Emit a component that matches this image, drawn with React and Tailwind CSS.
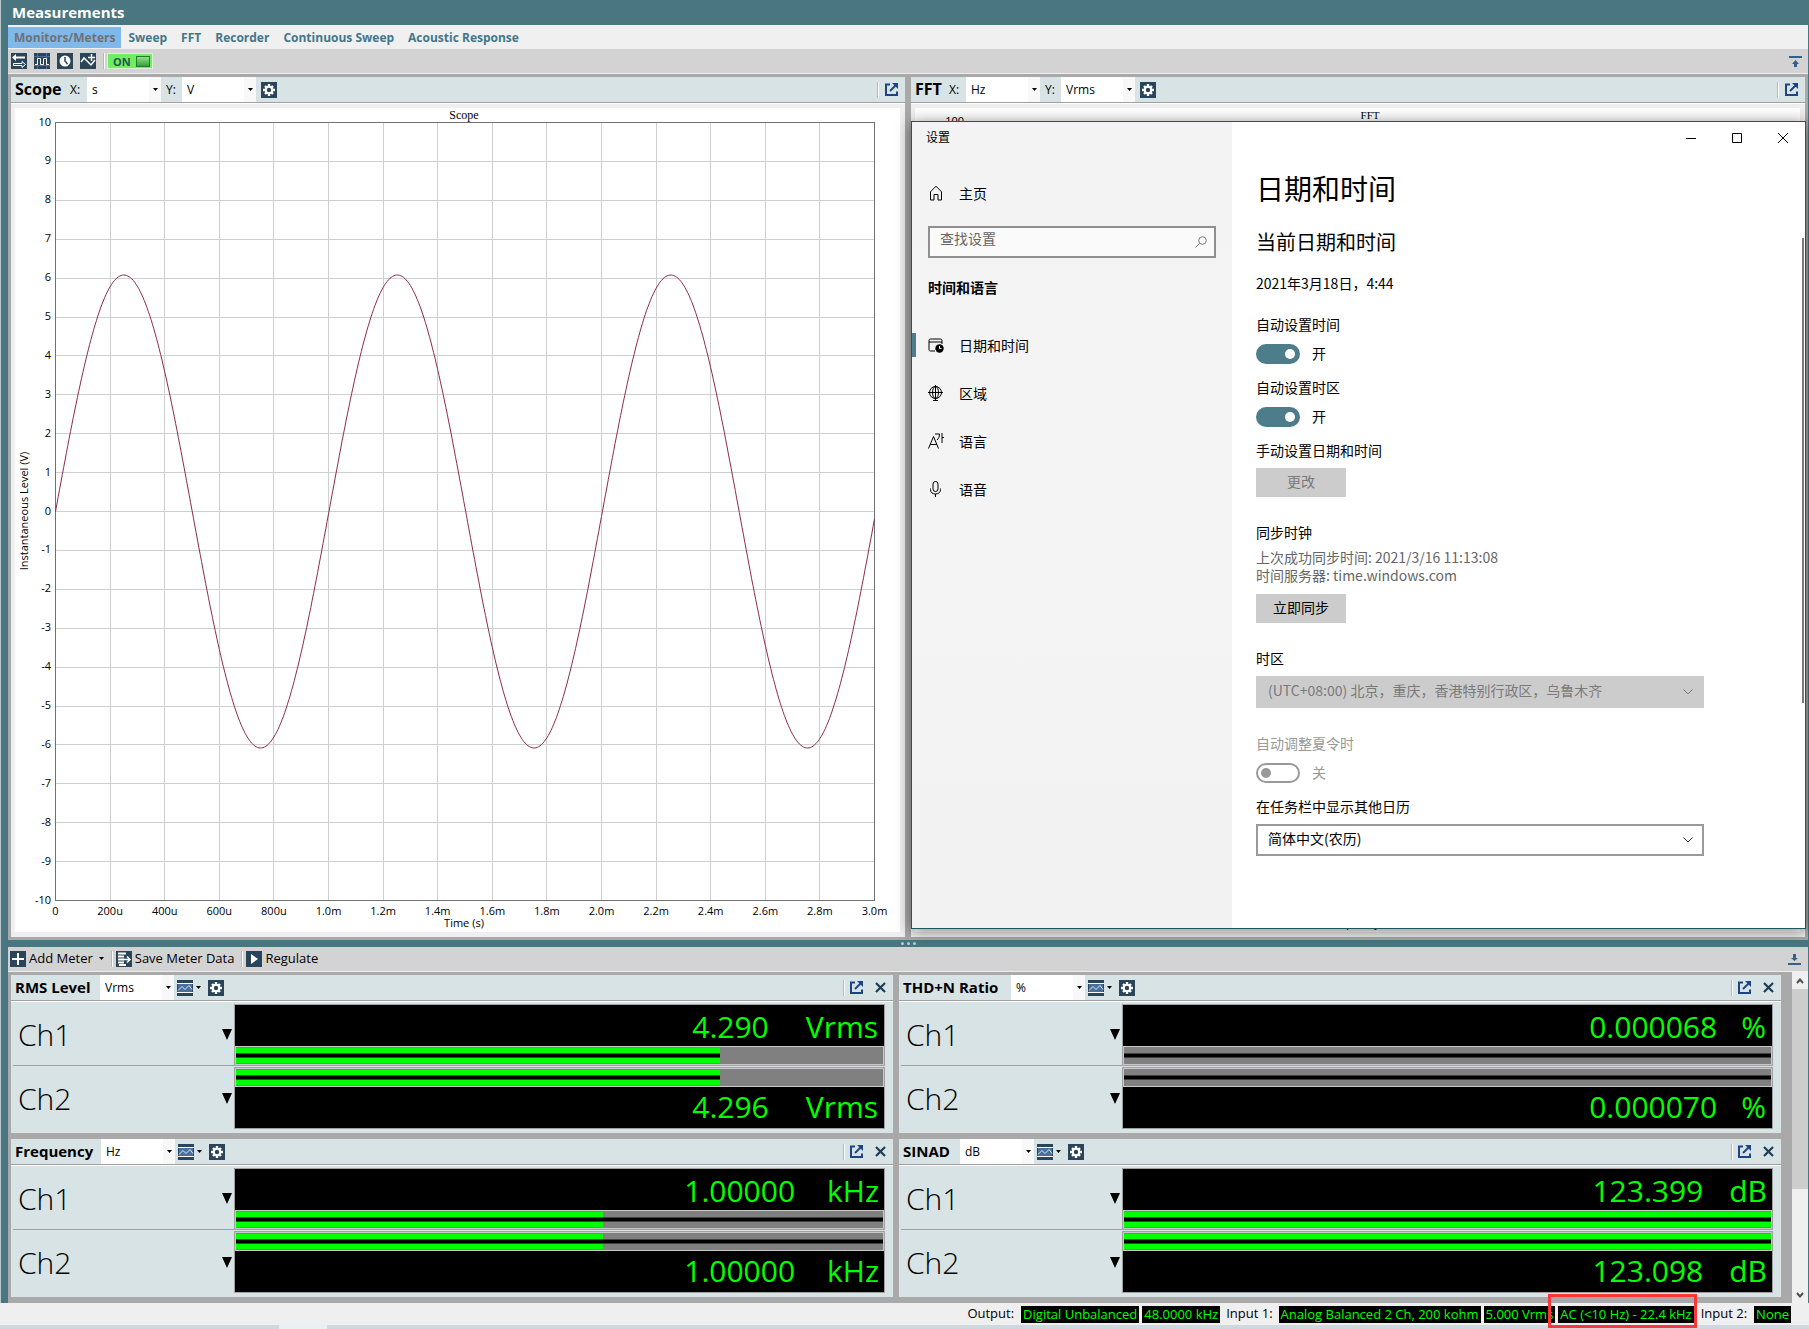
import React from 'react';

const TABS = ['Monitors/Meters', 'Sweep', 'FFT', 'Recorder', 'Continuous Sweep', 'Acoustic Response'];

const METERS = [
  {
    title: 'RMS Level',
    titleWidth: 'w-[89px]',
    unit: 'Vrms',
    gap: 'gap-[37px] pr-[6px]',
    fill: 74.8,
    lineFull: false,
    rows: [['4.290', 'Vrms'], ['4.296', 'Vrms']],
  },
  {
    title: 'THD+N Ratio',
    titleWidth: 'w-[112px]',
    unit: '%',
    gap: 'gap-6 pr-[6px]',
    fill: 0,
    lineFull: true,
    rows: [['0.000068', '%'], ['0.000070', '%']],
  },
  {
    title: 'Frequency',
    titleWidth: 'w-[90px]',
    unit: 'Hz',
    gap: 'gap-8 pr-[5px]',
    fill: 56.7,
    lineFull: true,
    rows: [['1.00000', 'kHz'], ['1.00000', 'kHz']],
  },
  {
    title: 'SINAD',
    titleWidth: 'w-[61px]',
    unit: 'dB',
    gap: 'gap-[26px] pr-[5px]',
    fill: 100,
    lineFull: true,
    rows: [['123.399', 'dB'], ['123.098', 'dB']],
  },
];

const IconBox = ({ label, children }) => (
  <button type="button" aria-label={label} className="block w-4 h-4 shrink-0 bg-[#2a4559]">
    <svg width="16" height="16" viewBox="0 0 16 16" fill="none" className="block">
      {children}
    </svg>
  </button>
);

const GearIcon = () => (
  <IconBox label="Settings">
    <path d="M8 2v12M2 8h12M4 4l8 8M12 4l-8 8" stroke="#fff" strokeWidth="2.4" />
    <circle cx="8" cy="8" r="3.200" fill="#2a4559" stroke="#fff" strokeWidth="2" />
  </IconBox>
);

const PopOutIcon = () => (
  <button type="button" aria-label="Open in window" className="block shrink-0">
    <svg width="13" height="13" viewBox="0 0 13 13" fill="none" stroke="#1f4486" className="block">
      <path d="M5 1.500H1V12h11V8.500" strokeWidth="2" />
      <path d="M7 0h6v6z" fill="#1f4486" stroke="none" />
      <path d="M10.500 2.500L5 8" strokeWidth="2" />
    </svg>
  </button>
);

const CloseIcon = () => (
  <button type="button" aria-label="Close meter" className="block shrink-0">
    <svg width="11" height="11" viewBox="0 0 11 11" stroke="#1d3d55" strokeWidth="2.2" className="block">
      <path d="M1 1l9 9M10 1L1 10" />
    </svg>
  </button>
);

const Caret = () => (
  <svg width="5" height="3" viewBox="0 0 5 3" className="block shrink-0">
    <path d="M0 0h5L2.500 3z" fill="#000" />
  </svg>
);

const Divider = () => <span className="block w-[2px] h-4 shrink-0 bg-[#b8b8b8] border-r border-white" />;

const UnitSelect = ({ label, value }) => (
  <div className="relative w-[74px] h-[25px] shrink-0">
    <select
      aria-label={label}
      defaultValue={value}
      className="block w-full h-full appearance-none bg-white pl-[5px] pr-3 text-xs text-black outline-none"
    >
      <option>{value}</option>
    </select>
    <span className="absolute right-0 top-0 w-3 h-full flex items-center justify-center bg-[#f8f8f8] pointer-events-none">
      <Caret />
    </span>
  </div>
);

const ToolStrip = ({ children }) => (
  <div className="h-[25px] flex items-center bg-[#d3d3d3] border-b border-[#eeeeee]">{children}</div>
);

const PanelHeader = ({ title, titleClass, children, actions }) => (
  <div className="h-[27px] flex flex-col">
    <div className="h-[25px] flex items-center bg-[#d8e3e5]">
      <h2 className={`${titleClass} shrink-0 pl-1 pb-px leading-none font-bold text-black whitespace-nowrap`}>{title}</h2>
      {children}
      <div className="ml-auto flex items-center">{actions}</div>
    </div>
    <div className="h-[2px] bg-[#9f9f9f] border-b border-white" />
  </div>
);

const GraphPanel = ({ title, titleClass, x, y, plot, children }) => (
  <section className="relative flex-1 min-w-0 bg-[#efefef]">
    <PanelHeader
      title={title}
      titleClass={titleClass}
      actions={
        <div className="flex items-center gap-[6px] pr-[7px]">
          <Divider />
          <PopOutIcon />
        </div>
      }
    >
      <span className="w-[17px] text-xs">X:</span>
      <UnitSelect label={`${title} X unit`} value={x} />
      <span className="w-[21px] pl-[5px] text-xs">Y:</span>
      <UnitSelect label={`${title} Y unit`} value={y} />
      <span className="pl-[5px]">
        <GearIcon />
      </span>
    </PanelHeader>
    <div className="pt-1 pb-[5px] pl-1 pr-[5px]">{plot}</div>
    {children}
  </section>
);

const LEFT = 40.5;
const TOP = 14.5;
const WIDTH = 819;
const HEIGHT = 778;

const ScopePlot = () => {
  const xLabels = ['0', '200u', '400u', '600u', '800u', '1.0m', '1.2m', '1.4m', '1.6m', '1.8m', '2.0m', '2.2m', '2.4m', '2.6m', '2.8m', '3.0m'];
  const points = [];
  for (let i = 0; i <= 600; i++) {
    const t = (i / 600) * 2.995;
    const v = 6.08 * Math.sin(2 * Math.PI * t);
    points.push(`${(LEFT + (i / 600) * WIDTH).toFixed(1)},${(TOP + HEIGHT / 2 - (v * HEIGHT) / 20).toFixed(1)}`);
  }
  return (
    <svg viewBox="0 0 885 824" className="block w-full h-auto bg-white" fontSize="11">
      <text x="449" y="11" textAnchor="middle" fontSize="12" className="font-['Liberation_Serif',serif]">
        Scope
      </text>
      <g stroke="#cfcfcf" shapeRendering="crispEdges">
        {xLabels.slice(1, 15).map((l, i) => (
          <line key={l} x1={LEFT + ((i + 1) * WIDTH) / 15} x2={LEFT + ((i + 1) * WIDTH) / 15} y1={TOP} y2={TOP + HEIGHT} />
        ))}
        {Array.from({ length: 19 }, (_, i) => (
          <line key={i} x1={LEFT} x2={LEFT + WIDTH} y1={TOP + ((i + 1) * HEIGHT) / 20} y2={TOP + ((i + 1) * HEIGHT) / 20} />
        ))}
      </g>
      <rect x={LEFT} y={TOP} width={WIDTH} height={HEIGHT} fill="none" stroke="#707070" />
      {xLabels.map((l, i) => (
        <text key={l} x={LEFT + (i * WIDTH) / 15} y="807" textAnchor="middle">
          {l}
        </text>
      ))}
      {Array.from({ length: 21 }, (_, i) => (
        <text key={i} x="36" y={TOP + (i * HEIGHT) / 20 + 3} textAnchor="end">
          {10 - i}
        </text>
      ))}
      <text x="449" y="819" textAnchor="middle">
        Time (s)
      </text>
      <text transform="translate(13 403) rotate(-90)" textAnchor="middle">
        Instantaneous Level (V)
      </text>
      <polyline points={points.join(' ')} fill="none" stroke="#8a2c48" />
    </svg>
  );
};

const FftPlot = () => (
  <svg viewBox="0 0 885 824" className="block w-full h-auto bg-white" fontSize="11">
    <text x="455" y="11" textAnchor="middle" fontSize="11" className="font-['Liberation_Serif',serif]">
      FFT
    </text>
    <text x="49" y="17" textAnchor="end">
      100
    </text>
    <text x="449" y="819" textAnchor="middle">
      Frequency (Hz)
    </text>
  </svg>
);

const LevelBar = ({ fill, lineFull }) => (
  <div className="h-[19px] border border-[#c8c8c8] bg-[#808080] flex flex-col justify-center relative">
    <div className="absolute inset-y-px left-0 bg-[#00ff00]" style={{ width: `${fill}%` }} />
    <div
      className="relative h-[5px] bg-black border-y border-[#404040]"
      style={{ width: lineFull ? '100%' : `${fill}%` }}
    />
  </div>
);

const Readout = ({ value, unit, gap, pad }) => (
  <div className={`h-[41px] flex items-center justify-end ${gap} ${pad} text-[30px] leading-[39px] text-[#00ff00]`}>
    <span>{value}</span>
    <span>{unit}</span>
  </div>
);

const ChannelLabel = ({ name }) => (
  <div className="w-[221px] shrink-0 flex items-center justify-between pl-[5px] pr-[2px]">
    <span className="pt-px text-[30px] leading-[40px] font-light text-black">{name}</span>
    <button type="button" aria-label={`${name} options`}>
      <svg width="10" height="11" viewBox="0 0 10 11" className="block">
        <path d="M0 0h10L5 11z" fill="#000" />
      </svg>
    </button>
  </div>
);

const Meter = ({ meter }) => {
  const { title, titleWidth, unit, gap, fill, lineFull, rows } = meter;
  return (
    <section className="min-w-0 bg-[#d8e3e5]">
      <PanelHeader
        title={title}
        titleClass={`${titleWidth} text-[15px]`}
        actions={
          <div className="flex items-center pr-[7px]">
            <Divider />
            <span className="pl-[5px] pr-3">
              <PopOutIcon />
            </span>
            <CloseIcon />
          </div>
        }
      >
        <UnitSelect label={`${title} unit`} value={unit} />
        <span className="flex items-center gap-[3px] pl-[3px] pr-[7px]">
          <IconBox label="Graph style">
            <path d="M1 4h14v8H1z" fill="#4a6f9c" />
            <path d="M0 3.500h16M0 12.500h16" stroke="#fff" />
            <path d="M1 10.500l4-4 3 3 4-4 3 4" stroke="#d5ecf5" />
          </IconBox>
          <Caret />
        </span>
        <GearIcon />
      </PanelHeader>
      <div className="pt-[2px] pb-1 pr-2 pl-[2px]">
        <div className="flex">
          <div className="flex border-b border-[#a0a0a0]">
            <ChannelLabel name="Ch1" />
          </div>
          <div className="flex-1 bg-black border border-[#a0a0a0]">
            <Readout value={rows[0][0]} unit={rows[0][1]} gap={gap} pad="pt-[2px]" />
            <LevelBar fill={fill} lineFull={lineFull} />
          </div>
        </div>
        <div className="flex pt-px">
          <ChannelLabel name="Ch2" />
          <div className="flex-1 bg-black border border-[#a0a0a0]">
            <LevelBar fill={fill} lineFull={lineFull} />
            <Readout value={rows[1][0]} unit={rows[1][1]} gap={gap} pad="pb-[2px]" />
          </div>
        </div>
      </div>
    </section>
  );
};

const NavItem = ({ label, active, children }) => (
  <a href="#" className="h-12 flex items-center text-[14px] text-black">
    <span className={`w-1 h-6 mr-3 ${active ? 'bg-[#4d7d8b]' : ''}`} />
    <svg width="16" height="16" viewBox="0 0 16 16" fill="none" stroke="#000" className="block mr-[15px]">
      {children}
    </svg>
    {label}
  </a>
);

const Toggle = ({ id, label, checked, disabled }) => (
  <div className={`h-[63px] ${disabled ? 'text-[#999999]' : 'text-black'}`}>
    <label htmlFor={id} className="block leading-5">
      {label}
    </label>
    <div className="flex items-center gap-3 pt-[10px]">
      <input
        id={id}
        type="checkbox"
        role="switch"
        defaultChecked={checked}
        disabled={disabled}
        className="appearance-none w-11 h-5 rounded-full border-2 border-[#999999] flex items-center px-[3px] checked:border-[#4d7d8b] checked:bg-[#4d7d8b] checked:justify-end before:block before:w-[10px] before:h-[10px] before:rounded-full before:bg-[#999999] checked:before:bg-white"
      />
      <span className="pb-[2px] leading-[18px]">{checked ? '开' : '关'}</span>
    </div>
  </div>
);

const SettingsSelect = ({ id, value, disabled }) => (
  <div className="relative w-[448px] max-w-full h-8">
    <select
      id={id}
      defaultValue={value}
      disabled={disabled}
      className="block w-full h-full appearance-none border-2 border-[#999999] bg-white pl-[10px] pb-[3px] text-[14px] text-black opacity-100 disabled:border-[#cccccc] disabled:bg-[#cccccc] disabled:text-[#7a7a7a]"
    >
      <option>{value}</option>
    </select>
    <svg width="10" height="6" viewBox="0 0 10 6" fill="none" stroke={disabled ? '#7a7a7a' : '#333'} className="absolute right-[11px] top-[13px] pointer-events-none">
      <path d="M.5 .5L5 5 9.500 .5" />
    </svg>
  </div>
);

const SettingsWindow = () => (
  <div
    role="dialog"
    aria-label="设置"
    className="absolute z-10 left-0 -right-px top-[44px] bottom-2 flex border border-[#1e5661] bg-white text-[14px] text-black font-['Noto_Sans_CJK_SC',sans-serif] shadow-[0_2px_14px_rgba(0,0,0,0.5)]"
  >
    <aside className="w-[320px] shrink-0 bg-linear-to-b from-[#f3f3f3] via-[#f4f4f4] to-[#f3f2f2]">
      <div className="h-[29px] flex items-center pl-[14px] text-xs">设置</div>
      <div className="pt-[18px]">
        <NavItem label="主页">
          <path d="M2.500 6.800L8 1.200l5.500 5.600V15h-3.500V9.500H6V15H2.500z" strokeLinejoin="round" />
        </NavItem>
      </div>
      <div className="ml-4 mr-4 mt-[9px] relative">
        <input
          type="text"
          aria-label="查找设置"
          placeholder="查找设置"
          className="block w-full h-8 border-2 border-[#8f8f8f] bg-[#fafafa] pl-[10px] pb-2 text-[14px] leading-5 placeholder:text-[#666666]"
        />
        <svg width="12" height="12" viewBox="0 0 12 12" fill="none" stroke="#777" className="absolute right-[9px] top-[10px]">
          <circle cx="7.500" cy="4.500" r="3.800" />
          <path d="M4.700 7.300L.5 11.500" />
        </svg>
      </div>
      <h3 className="pl-4 mt-[19px] leading-5 font-bold">时间和语言</h3>
      <nav className="mt-6">
        <NavItem label="日期和时间" active>
          <path d="M7 14H2.500C1.500 14 1 13.500 1 12.500v-9C1 2.500 1.500 2 2.500 2h10c1 0 1.500.5 1.500 1.500V7M1 5h13" />
          <circle cx="11.500" cy="11.500" r="4.200" fill="#000" stroke="none" />
          <path d="M11.500 9v2.500h2" stroke="#fff" />
        </NavItem>
        <NavItem label="区域">
          <circle cx="7.500" cy="7.500" r="6" />
          <ellipse cx="7.500" cy="7.500" rx="3" ry="6" />
          <path d="M0 7.500h15M7.500 0v15.500M5 15.500h5" />
        </NavItem>
        <NavItem label="语言">
          <path d="M.5 15.500L5.500 3.500l5 12M2.300 11.500h6.400M7 1h4.500c0 3-1 4.500-2.500 6M14 0v10M14 4.500h2" />
        </NavItem>
        <NavItem label="语音">
          <rect x="5" y=".5" width="5" height="10" rx="2.500" />
          <path d="M2.500 7.500v1c0 3 2 4.500 5 4.500s5-1.500 5-4.500v-1M7.500 13v3" />
        </NavItem>
      </nav>
    </aside>
    <div className="relative flex-1 min-w-0 pl-6">
      <div className="h-8 flex justify-end items-center gap-9 pr-[17px]">
        <button type="button" aria-label="最小化">
          <svg width="10" height="10" viewBox="0 0 10 10" stroke="#000" className="block">
            <path d="M0 5.500h10" />
          </svg>
        </button>
        <button type="button" aria-label="最大化">
          <svg width="10" height="10" viewBox="0 0 10 10" fill="none" stroke="#000" className="block">
            <path d="M.5 .5h9v9h-9z" />
          </svg>
        </button>
        <button type="button" aria-label="关闭">
          <svg width="10" height="10" viewBox="0 0 10 10" stroke="#000" className="block">
            <path d="M0 0l10 10M10 0L0 10" />
          </svg>
        </button>
      </div>
      <h1 className="mt-[15px] text-[28px] leading-[38px]">日期和时间</h1>
      <h2 className="mt-[21px] text-[20px] leading-7">当前日期和时间</h2>
      <p className="mt-[17px] mb-[21px] leading-5">2021年3月18日，4:44</p>
      <Toggle id="auto-time" label="自动设置时间" checked />
      <Toggle id="auto-zone" label="自动设置时区" checked />
      <p className="leading-5">手动设置日期和时间</p>
      <button type="button" disabled className="block mt-2 w-[90px] h-[29px] pb-[2px] bg-[#cccccc] text-[#7a7a7a]">
        更改
      </button>
      <p className="mt-[25px] leading-5">同步时钟</p>
      <p className="mt-[6px] leading-[18px] text-[#666666]">
        上次成功同步时间: 2021/3/16 11:13:08
        <br />
        时间服务器: time.windows.com
      </p>
      <button type="button" className="block mt-[10px] w-[90px] h-[29px] pb-[2px] bg-[#cccccc]">
        立即同步
      </button>
      <label htmlFor="zone" className="block mt-[25px] mb-2 leading-5">
        时区
      </label>
      <SettingsSelect id="zone" value="(UTC+08:00) 北京，重庆，香港特别行政区，乌鲁木齐" disabled />
      <div className="mt-[25px]">
        <Toggle id="dst" label="自动调整夏令时" disabled />
      </div>
      <label htmlFor="calendar" className="block mb-2 leading-5">
        在任务栏中显示其他日历
      </label>
      <SettingsSelect id="calendar" value="简体中文(农历)" />
      <span className="absolute right-px top-[116px] w-[2px] h-[465px] bg-[#7a7a7a]" />
    </div>
  </div>
);

const StatusValue = ({ children }) => (
  <span className="block h-[17px] px-[2px] bg-black text-[#00ff00] leading-[17px]">{children}</span>
);

const App = () => (
  <div className="min-h-screen flex flex-col bg-[#4a7682] text-xs text-black font-['Open_Sans','Noto_Sans',sans-serif]">
    <div className="flex-1 flex flex-col border-l border-[#b9c9ce]">
      <header className="h-[25px] pl-[11px] pb-px flex items-center">
        <h1 className="text-[15px] leading-5 font-bold text-white">Measurements</h1>
      </header>

      <div className="pl-[7px] pr-px">
        <nav className="h-6 flex items-center bg-[#f0f0f0]">
          {TABS.map((tab, i) => (
            <a
              key={tab}
              href="#"
              className={`h-[21px] leading-[21px] font-bold whitespace-nowrap ${
                i === 0 ? 'px-[6px] bg-[#7fb8ea] text-[#6f7275]' : 'px-[7px] text-[#44768a]'
              }`}
            >
              {tab}
            </a>
          ))}
        </nav>
        <ToolStrip>
          <div className="flex items-center gap-[7px] pl-[3px]">
            <IconBox label="Switch inputs">
              <path d="M1 4.500L5 1v2.500h9v2H5V8z" fill="#fff" />
              <path d="M14.500 11.500L11 8.500v2H2.500v2H11v2z" stroke="#fff" />
            </IconBox>
            <IconBox label="Digital wave">
              <path d="M0 3.500h16M0 12.500h16M3.500 0v16M12.500 0v16" stroke="#4c6ea0" />
              <path d="M1 11.500h2.500v-6h3v6h3v-6h3v6H15" stroke="#fff" />
            </IconBox>
            <IconBox label="Clock">
              <circle cx="8" cy="8" r="5.500" fill="#fff" />
              <path d="M8 4v4l2.500 3" stroke="#2a4559" strokeWidth="1.500" />
            </IconBox>
            <IconBox label="Add wave">
              <path d="M1 9l3-4 7 7 4-5M8 4.500h7M11.500 1v7" stroke="#fff" strokeWidth="1.500" />
            </IconBox>
            <Divider />
          </div>
          <button
            type="button"
            aria-pressed="true"
            className="ml-[2px] w-[46px] h-4 flex items-center justify-between pl-[5px] pr-[2px] border border-[#d9f5d5] bg-[#6fee62] text-[11px] leading-none font-bold text-[#25564c]"
          >
            ON
            <span className="block w-[14px] h-[11px] border border-[#267a2a] bg-linear-to-b from-[#8fe08a] to-[#35a238]" />
          </button>
          <svg width="13" height="11" viewBox="0 0 13 11" fill="#355f8f" className="ml-auto mr-[6px]">
            <path d="M0 0h13v2H0zM6.500 4L10 8H8v3H5V8H3z" />
          </svg>
        </ToolStrip>

        <div className="flex gap-[6px] pt-[3px] pb-[3px] pl-[3px] pr-[3px] bg-[#a9a9a9]">
          <GraphPanel title="Scope" titleClass="w-[59px] text-[16px]" x="s" y="V" plot={<ScopePlot />} />
          <GraphPanel title="FFT" titleClass="w-[38px] text-[16px]" x="Hz" y="Vrms" plot={<FftPlot />}>
            <SettingsWindow />
          </GraphPanel>
        </div>

        <div className="h-[7px] flex items-center justify-center gap-[3px]">
          <span className="w-[3px] h-[3px] rounded-full bg-[#b5cdd6]" />
          <span className="w-[3px] h-[3px] rounded-full bg-[#b5cdd6]" />
          <span className="w-[3px] h-[3px] rounded-full bg-[#b5cdd6]" />
        </div>

        <ToolStrip>
          <div className="flex items-center gap-[3px] pl-[2px]">
            <IconBox label="Add meter">
              <path d="M8 2v12M2 8h12" stroke="#fff" strokeWidth="2" />
            </IconBox>
            <button type="button" className="flex items-center gap-[6px] pr-1 text-[13px]">
              Add Meter <Caret />
            </button>
            <Divider />
            <IconBox label="Save">
              <path d="M2 2.500h8M2 5.500h6M2 8.500h6M2 11.500h6M3 14h7" stroke="#fff" strokeWidth="2" />
              <path d="M7 8.500h6M11 5.500l3 3-3 3" stroke="#fff" strokeWidth="1.500" />
            </IconBox>
            <button type="button" className="pr-1 text-[13px]">
              Save Meter Data
            </button>
            <Divider />
            <IconBox label="Run">
              <path d="M5 3l7 5-7 5z" fill="#fff" />
            </IconBox>
            <button type="button" className="text-[13px]">
              Regulate
            </button>
          </div>
          <svg width="13" height="11" viewBox="0 0 13 11" fill="#355f8f" className="ml-auto mr-[7px]">
            <path d="M0 9h13v2H0zM6.500 7L3 4h2V0h3v4h2z" />
          </svg>
        </ToolStrip>

        <div className="flex bg-[#a9a9a9]">
          <div className="flex-1 grid grid-cols-2 gap-[6px] pt-[3px] pb-[6px] pl-[3px] pr-[11px]">
            {METERS.map((m) => (
              <Meter key={m.title} meter={m} />
            ))}
          </div>
          <div className="w-4 flex flex-col bg-[#f0f0f0]">
            <div className="h-[17px] flex items-center justify-center">
              <svg width="8" height="6" viewBox="0 0 8 6" fill="none" stroke="#505050" strokeWidth="2">
                <path d="M1 5l3-3.500L7 5" />
              </svg>
            </div>
            <div className="h-[200px] bg-[#cdcdcd]" />
            <div className="mt-auto h-[17px] flex items-center justify-center">
              <svg width="8" height="6" viewBox="0 0 8 6" fill="none" stroke="#505050" strokeWidth="2">
                <path d="M1 1l3 3.500L7 1" />
              </svg>
            </div>
          </div>
        </div>
      </div>
    </div>

    <footer>
      <div className="h-[22px] flex items-center justify-end gap-[3px] pr-[18px] bg-[#efefef] text-[13px] whitespace-nowrap">
        <span className="pr-1">Output:</span>
        <StatusValue>Digital Unbalanced</StatusValue>
        <StatusValue>48.0000 kHz</StatusValue>
        <span className="px-[3px]">Input 1:</span>
        <StatusValue>Analog Balanced 2 Ch, 200 kohm</StatusValue>
        <StatusValue>5.000 Vrms</StatusValue>
        <span className="relative">
          <StatusValue>AC (&lt;10 Hz) - 22.4 kHz</StatusValue>
          <span className="absolute -left-[10px] -right-[3px] -top-3 -bottom-[5px] border-[3px] border-[#f83838]" />
        </span>
        <span className="px-1">Input 2:</span>
        <StatusValue>None</StatusValue>
      </div>
      <div className="h-1 flex bg-[#d0d8df]">
        <span className="ml-[279px] w-12 h-full bg-[#eaeff3]" />
      </div>
    </footer>
  </div>
);

export default App;
